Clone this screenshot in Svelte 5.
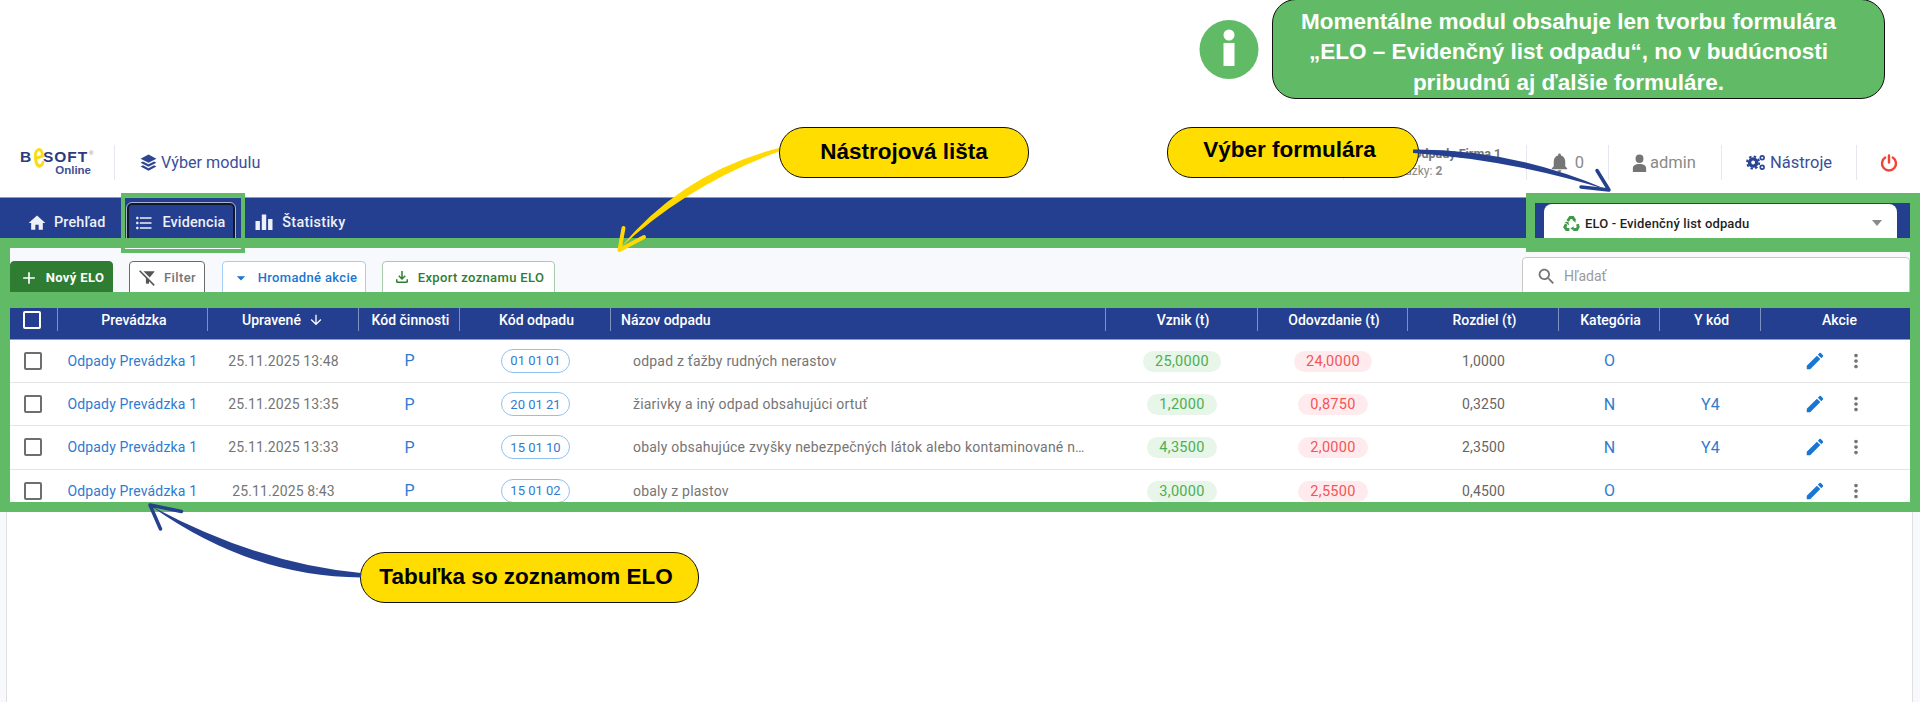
<script>
  // table data
  const columns = [
    { label: 'Prevádzka' },
    { label: 'Upravené', sort: true },
    { label: 'Kód činnosti' },
    { label: 'Kód odpadu' },
    { label: 'Názov odpadu', left: true },
    { label: 'Vznik (t)' },
    { label: 'Odovzdanie (t)' },
    { label: 'Rozdiel (t)' },
    { label: 'Kategória' },
    { label: 'Y kód' },
    { label: 'Akcie', last: true }
  ];

  const rows = [
    { date: '25.11.2025 13:48', code: '01 01 01', name: 'odpad z ťažby rudných nerastov', made: '25,0000', gone: '24,0000', diff: '1,0000', cat: 'O', y: '' },
    { date: '25.11.2025 13:35', code: '20 01 21', name: 'žiarivky a iný odpad obsahujúci ortuť', made: '1,2000', gone: '0,8750', diff: '0,3250', cat: 'N', y: 'Y4' },
    { date: '25.11.2025 13:33', code: '15 01 10', name: 'obaly obsahujúce zvyšky nebezpečných látok alebo kontaminované n…', made: '4,3500', gone: '2,0000', diff: '2,3500', cat: 'N', y: 'Y4' },
    { date: '25.11.2025 8:43', code: '15 01 02', name: 'obaly z plastov', made: '3,0000', gone: '2,5500', diff: '0,4500', cat: 'O', y: '' }
  ];

  const editPath = 'M3 17.25V21h3.75L17.81 9.94l-3.75-3.75L3 17.25zM20.71 7.04c.39-.39.39-1.02 0-1.41l-2.34-2.34c-.39-.39-1.02-.39-1.41 0l-1.83 1.83 3.75 3.75 1.83-1.83z';
  const morePath = 'M12 8c1.1 0 2-.9 2-2s-.9-2-2-2-2 .9-2 2 .9 2 2 2zm0 2c-1.1 0-2 .9-2 2s.9 2 2 2 2-.9 2-2-.9-2-2-2zm0 6c-1.1 0-2 .9-2 2s.9 2 2 2 2-.9 2-2-.9-2-2-2z';
</script>

<div class="page">
  <div class="notes-space"></div>

  <header class="topbar">
    <div class="logo-box">
      <div class="logo">
        <div class="logo-main">B<span class="logo-e">e</span>SOFT<sup>®</sup></div>
        <div class="logo-sub">Online</div>
      </div>
    </div>
    <div class="module">
      <svg width="19" height="19" viewBox="0 0 24 24" fill="#2f4590"><path d="M12 2 2 7.2l10 5.2 10-5.2z" /><path d="M5 10.6 2 12.2l10 5.2 10-5.2-3-1.6-7 3.6z" /><path d="M5 15.6l-3 1.6L12 22.4l10-5.2-3-1.6-7 3.6z" /></svg>
      <span>Výber modulu</span>
    </div>
    <div class="top-right">
      <div class="top-item company">
        <div class="company-name">Firma: Odpady Firma 1</div>
        <div class="company-sub">Prevádzky: <b>2</b></div>
      </div>
      <div class="top-item bell">
        <svg width="23" height="23" viewBox="0 0 24 24" fill="#757575"><path d="M12 22c1.1 0 2-.9 2-2h-4c0 1.1.9 2 2 2zm6-6v-5c0-3.07-1.63-5.64-4.5-6.32V4c0-.83-.67-1.5-1.5-1.5s-1.5.67-1.5 1.5v.68C7.64 5.36 6 7.92 6 11v5l-2 2v1h16v-1l-2-2z" /></svg>
        <span>0</span>
      </div>
      <div class="top-item user">
        <svg width="15" height="18" viewBox="0 0 17 19" preserveAspectRatio="none" fill="#757575"><circle cx="8.5" cy="5" r="4.5" /><path d="M1 19v-4c0-2.6 2.4-4.5 7.5-4.5S16 12.4 16 15v4z" /></svg>
        <span>admin</span>
      </div>
      <div class="top-item tools">
        <svg width="20" height="17" viewBox="0 0 21 17" fill="none" stroke="#2a4494">
          <circle cx="7.5" cy="8.5" r="3.8" stroke-width="3.6" />
          <circle cx="7.5" cy="8.5" r="6.4" stroke-width="2" stroke-dasharray="2.6 2.4" />
          <circle cx="17" cy="3.5" r="2" stroke-width="1.7" />
          <circle cx="17" cy="13.5" r="2" stroke-width="1.7" />
        </svg>
        <span>Nástroje</span>
      </div>
      <div class="top-item power">
        <svg width="18" height="18" viewBox="0 0 18 18" fill="none" stroke="#f44336" stroke-width="2.4" stroke-linecap="round"><path d="M5.2 3.6a7 7 0 1 0 7.6 0" /><path d="M9 1.5v7" /></svg>
      </div>
    </div>
  </header>

  <nav class="nav">
    <div class="tabs">
      <div class="tab">
        <svg width="20" height="20" viewBox="0 0 24 24" fill="#eef0f8"><path d="M10 20v-6h4v6h5v-8h3L12 3 2 12h3v8z" /></svg>
        <span>Prehľad</span>
      </div>
      <div class="tab active">
        <svg width="20" height="20" viewBox="0 0 24 24" fill="#eef0f8"><path d="M4 10.5c-.83 0-1.5.67-1.5 1.5s.67 1.5 1.5 1.5 1.5-.67 1.5-1.5-.67-1.5-1.5-1.5zm0-6c-.83 0-1.5.67-1.5 1.5S3.17 7.5 4 7.5 5.5 6.83 5.5 6 4.83 4.5 4 4.5zm0 12c-.83 0-1.5.68-1.5 1.5s.68 1.5 1.5 1.5 1.5-.68 1.5-1.5-.67-1.5-1.5-1.5zM7 19h14v-2H7v2zm0-6h14v-2H7v2zm0-8v2h14V5H7z" /></svg>
        <span>Evidencia</span>
      </div>
      <div class="tab stats">
        <svg width="18" height="18" viewBox="0 0 18 18" fill="#eef0f8"><rect x="0.5" y="8" width="4.4" height="9" /><rect x="6.8" y="1.5" width="4.4" height="15.5" /><rect x="13.1" y="6" width="4.4" height="11" /></svg>
        <span>Štatistiky</span>
      </div>
    </div>
    <div class="form-select">
      <svg width="17" height="17" viewBox="0 0 24 24" fill="none" stroke="#3f9a45" stroke-width="4">
        <path d="M6.5 8.5 10 3.5h4l2.5 4" />
        <path d="M20.5 13l1 4-2 3.5h-5" />
        <path d="M9 20.5H5l-2.5-3.5 2-4" />
        <path d="M13 6.5l5-.5-.5 5zM15 16l0 6-4.5-3zM2 10l5.5-.5 1 5z" fill="#3f9a45" stroke="none" />
      </svg>
      <span class="form-name">ELO - Evidenčný list odpadu</span>
      <svg class="caret" width="10" height="6" viewBox="0 0 10 6" fill="#8a8a8a"><path d="M0 0h10L5 6z" /></svg>
    </div>
  </nav>

  <div class="shell">
    <main class="panel">
      <div class="toolbar">
        <div class="btn primary">
          <svg width="20" height="20" viewBox="0 0 24 24" fill="#fff"><path d="M19 13h-6v6h-2v-6H5v-2h6V5h2v6h6v2z" /></svg>
          <span>Nový ELO</span>
        </div>
        <div class="btn filter">
          <svg width="19" height="19" viewBox="0 0 24 24" fill="#555"><path d="M14.8 11.97 20.76 4.6c.25-.32.02-.6-.4-.6H6.83l7.97 7.97zM2.81 2.81 1.39 4.22 10 13v6c0 .55.45 1 1 1h2c.55 0 1-.45 1-1v-2.17l5.78 5.78 1.41-1.41L2.81 2.81z" /></svg>
          <span>Filter</span>
        </div>
        <div class="btn bulk">
          <svg width="20" height="20" viewBox="0 0 24 24" fill="#1976d2"><path d="M7 10l5 5 5-5z" /></svg>
          <span>Hromadné akcie</span>
        </div>
        <div class="btn export">
          <svg width="18" height="18" viewBox="0 0 24 24" fill="#2e7d32"><path d="M18 15v3H6v-3H4v3c0 1.1.9 2 2 2h12c1.1 0 2-.9 2-2v-3h-2zm-1-4l-1.41-1.41L13 12.17V4h-2v8.17L8.41 9.59 7 11l5 5 5-5z" /></svg>
          <span>Export zoznamu ELO</span>
        </div>
        <div class="search">
          <svg width="21" height="21" viewBox="0 0 24 24" fill="#757575"><path d="M15.5 14h-.79l-.28-.27C15.41 12.59 16 11.11 16 9.5 16 5.91 13.09 3 9.5 3S3 5.91 3 9.5 5.91 16 9.5 16c1.61 0 3.09-.59 4.23-1.57l.27.28v.79l5 4.99L20.49 19l-4.99-5zm-6 0C7.01 14 5 11.99 5 9.5S7.01 5 9.5 5 14 7.01 14 9.5 11.99 14 9.5 14z" /></svg>
          <span>Hľadať</span>
        </div>
      </div>

      <div class="table">
        <div class="grid head">
          <div class="th check"><span class="box light"></span></div>
          {#each columns as col}
            <div class="th" class:left={col.left} class:last={col.last} class:sorted={col.sort}>
              <span>{col.label}</span>
              {#if col.sort}
                <svg width="16" height="16" viewBox="0 0 24 24" fill="#fff"><path d="M20 12l-1.41-1.41L13 16.17V4h-2v12.17l-5.58-5.59L4 12l8 8 8-8z" /></svg>
              {/if}
            </div>
          {/each}
        </div>

        {#each rows as row}
          <div class="grid row">
            <div class="td"><span class="box"></span></div>
            <div class="td link">Odpady Prevádzka 1</div>
            <div class="td date">{row.date}</div>
            <div class="td big">P</div>
            <div class="td"><span class="code">{row.code}</span></div>
            <div class="td name">{row.name}</div>
            <div class="td"><span class="pill made">{row.made}</span></div>
            <div class="td"><span class="pill gone">{row.gone}</span></div>
            <div class="td diff">{row.diff}</div>
            <div class="td big">{row.cat}</div>
            <div class="td big">{row.y}</div>
            <div class="td actions">
              <svg width="22" height="22" viewBox="0 0 24 24" fill="#1976d2"><path d={editPath} /></svg>
              <svg width="22" height="22" viewBox="0 0 24 24" fill="#757575"><path d={morePath} /></svg>
            </div>
          </div>
        {/each}
      </div>
    </main>
  </div>

  <!-- annotations drawn over the screenshot -->
  <div class="frame frame-tab"></div>
  <div class="frame frame-select"></div>
  <div class="frame frame-toolbar"></div>
  <div class="frame frame-table"></div>

  <div class="callout info">
    Momentálne modul obsahuje len tvorbu formulára<br />
    „ELO – Evidenčný list odpadu“, no v budúcnosti<br />
    pribudnú aj ďalšie formuláre.
  </div>
  <div class="callout tag tag-tool">Nástrojová lišta</div>
  <div class="callout tag tag-form">Výber formulára</div>
  <div class="callout tag tag-table">Tabuľka so zoznamom ELO</div>

  <svg class="marks" width="1920" height="702" viewBox="0 0 1920 702">
    <ellipse cx="1229" cy="49.5" rx="29.5" ry="29.5" fill="#61bb66" />
    <circle cx="1229" cy="35" r="5.5" fill="#fff" />
    <rect x="1223.5" y="43" width="11" height="23" fill="#fff" />

    <path d="M779 148Q683 172 620 248Q689 184 779 151.5z" fill="#ffd900" />
    <path d="M623.5 228L619.5 250L644 237" fill="none" stroke="#ffd900" stroke-width="4" stroke-linecap="round" stroke-linejoin="round" />

    <path d="M1413 149.5Q1513 149 1608 190Q1513 160 1413 153z" fill="#24408f" />
    <path d="M1597 170.5L1609 190L1581 187" fill="none" stroke="#24408f" stroke-width="3.5" stroke-linecap="round" stroke-linejoin="round" />

    <path d="M361 573Q259 564 151 506Q251 577 361 577.5z" fill="#24408f" />
    <path d="M181.5 511.5L150 505L160.5 529" fill="none" stroke="#24408f" stroke-width="3.5" stroke-linecap="round" stroke-linejoin="round" />
  </svg>
</div>

<style>
  :global(body) {
    margin: 0;
    background: #fff;
  }
  .page {
    position: relative;
    width: 1920px;
    height: 702px;
    overflow: hidden;
    background: #fff;
    font-family: Roboto, 'Liberation Sans', sans-serif;
    display: flex;
    flex-direction: column;
  }
  .notes-space {
    height: 120px;
    flex: none;
  }

  /* top bar */
  .topbar {
    height: 77px;
    flex: none;
    box-sizing: border-box;
    padding-top: 25px;
    display: flex;
    align-items: flex-start;
  }
  .logo-box {
    width: 115px;
    height: 35px;
    box-sizing: border-box;
    border-right: 1px solid #e6e8f0;
    padding-left: 20px;
  }
  .logo {
    width: 73px;
    font-family: 'Liberation Sans', sans-serif;
    font-weight: 700;
    color: #2d3a7c;
  }
  .logo-main {
    height: 14px;
    margin-top: 5px;
    font-size: 15.5px;
    line-height: 14px;
    letter-spacing: 0.9px;
    white-space: nowrap;
    display: flex;
  }
  .logo-e {
    display: block;
    width: 11px;
    font-size: 36px;
    line-height: 14px;
    color: #f7dc17;
    transform: scaleX(0.58) rotate(-12deg);
    transform-origin: 3px 7px;
    letter-spacing: 0;
  }
  .logo-main sup {
    font-size: 6px;
    line-height: 6px;
    color: #888;
    font-weight: 400;
    letter-spacing: 0;
    margin-left: 1px;
  }
  .logo-sub {
    font-size: 11.5px;
    line-height: 12px;
    color: #3f5096;
    text-align: right;
    padding-right: 2px;
  }
  .module {
    height: 35px;
    display: flex;
    align-items: center;
    gap: 3px;
    padding-left: 24px;
    font-size: 16.2px;
    color: #3a4e9a;
  }
  .top-right {
    margin-left: auto;
    display: flex;
  }
  .top-item {
    height: 35px;
    box-sizing: border-box;
    border-left: 1px solid #e6e8f0;
    display: flex;
    align-items: center;
    justify-content: center;
    gap: 4px;
    font-size: 16.5px;
    color: #8a8a8a;
  }
  .company {
    width: 183px;
    flex-direction: column;
    align-items: flex-start;
    gap: 0;
    padding-left: 31px;
    font-size: 12px;
    white-space: nowrap;
  }
  .company-name {
    font-weight: 700;
    font-size: 12.5px;
    line-height: 18px;
    margin-left: -1px;
    color: #757575;
  }
  .company-sub {
    font-size: 12px;
    line-height: 17px;
    color: #8a8a8a;
  }
  .bell {
    width: 82px;
    gap: 4px;
    padding-right: 3px;
  }
  .user {
    width: 113px;
    gap: 3px;
    padding-right: 2px;
  }
  .tools {
    width: 135px;
    gap: 4px;
    color: #3a4e9a;
  }
  .power {
    width: 64px;
  }

  /* blue navigation */
  .nav {
    height: 51px;
    flex: none;
    box-sizing: border-box;
    background: #243f8f;
    border-top: 1px solid #8c9bc8;
    padding: 5px 23px 0 18px;
    display: flex;
    justify-content: space-between;
  }
  .tabs {
    display: flex;
    gap: 10px;
  }
  .tab {
    height: 46px;
    box-sizing: border-box;
    padding: 10px 9px 0;
    display: flex;
    align-items: flex-start;
    gap: 7px;
    font-size: 14.4px;
    line-height: 20px;
    font-weight: 500;
    letter-spacing: 0.15px;
    color: #eef0f8;
  }
  .tab.active {
    margin-left: 3px;
    padding: 8px 8px 0 5px;
    gap: 8px;
    border: 2px solid #111827;
    border-radius: 5px;
    outline: 1px solid #a9b1cc;
  }
  .tab.stats {
    margin-left: 1px;
    gap: 9px;
    letter-spacing: 0.3px;
  }
  .form-select {
    width: 353px;
    height: 44px;
    box-sizing: border-box;
    margin-top: 1px;
    background: #fff;
    border-radius: 8px;
    padding: 0 15px 6px 19px;
    display: flex;
    align-items: center;
    gap: 5px;
  }
  .form-name {
    font-size: 13px;
    font-weight: 500;
    color: #1f1f1f;
    letter-spacing: 0.15px;
  }
  .caret {
    margin-left: auto;
  }

  /* content */
  .shell {
    flex: 1;
    min-height: 0;
    background: #f8f9fc;
    padding: 0 7px 0 6px;
    display: flex;
  }
  .panel {
    flex: 1;
    min-width: 0;
    box-sizing: border-box;
    background: #fff;
    border-left: 1px solid #e0e0e0;
    border-right: 1px solid #e0e0e0;
    padding: 0 2px 0 3px;
  }
  .toolbar {
    height: 60px;
    box-sizing: border-box;
    background: #f8f9fc;
    padding-top: 13px;
    display: flex;
    align-items: flex-start;
    gap: 17px;
  }
  .btn {
    height: 36px;
    box-sizing: border-box;
    border: 1px solid;
    border-radius: 4px;
    background: #fff;
    padding-top: 6px;
    display: flex;
    align-items: flex-start;
    justify-content: center;
    gap: 7px;
    font-size: 13px;
    line-height: 20px;
    font-weight: 500;
    letter-spacing: 0.35px;
    white-space: nowrap;
  }
  .primary {
    width: 103px;
    background: #2e7d32;
    border-color: #2e7d32;
    color: #fff;
    font-weight: 700;
  }
  .filter {
    width: 76px;
    margin-left: -1px;
    border-color: #6b6b6b;
    color: #757575;
  }
  .bulk {
    width: 144px;
    border-color: #a3cdf3;
    color: #1976d2;
  }
  .export {
    width: 173px;
    margin-left: -1px;
    border-color: #a9cbab;
    color: #2e7d32;
  }
  .search {
    width: 388px;
    height: 44px;
    box-sizing: border-box;
    margin: -4px 0 0 auto;
    background: #fff;
    border: 1px solid #c8c8c8;
    border-radius: 4px;
    padding: 8px 0 0 13px;
    display: flex;
    align-items: flex-start;
    gap: 7px;
    font-size: 14px;
    line-height: 21px;
    color: #9a9a9a;
  }

  /* table */
  .table {
    height: 204px;
    overflow: hidden;
  }
  .grid {
    display: grid;
    grid-template-columns: 48px 150px 151px 101px 151px 495px 152px 150px 151px 101px 101px 149px;
  }
  .head {
    height: 31.5px;
    box-sizing: border-box;
    background: #243f8f;
    border-bottom: 1px solid #8c9bc8;
    align-items: start;
  }
  .th {
    height: 23px;
    box-sizing: border-box;
    border-right: 1px solid rgba(255, 255, 255, 0.42);
    padding-left: 3px;
    display: flex;
    align-items: center;
    justify-content: center;
    gap: 7px;
    color: #fff;
    font-size: 14px;
    font-weight: 500;
    white-space: nowrap;
  }
  .th.check {
    padding: 0 3px 0 0;
  }
  .th.sorted {
    padding-left: 0;
  }
  .th.left {
    justify-content: flex-start;
    padding-left: 10px;
  }
  .th.last {
    border-right: 0;
    padding-left: 8px;
  }
  .row {
    height: 43.4px;
    box-sizing: border-box;
    border-bottom: 1px solid #e4e4e4;
    background: #fff;
    align-items: center;
  }
  .td {
    display: flex;
    align-items: center;
    justify-content: center;
    font-size: 14px;
    letter-spacing: 0.12px;
    color: #757575;
    white-space: nowrap;
    min-width: 0;
  }
  .box {
    display: block;
    width: 18px;
    height: 18px;
    box-sizing: border-box;
    border: 2px solid #6e6e6e;
    border-radius: 2px;
  }
  .td .box {
    margin-right: 3px;
  }
  .box.light {
    border-color: #fff;
  }
  .link {
    justify-content: flex-start;
    padding-left: 9.5px;
    letter-spacing: 0.15px;
    color: #2f7bd0;
  }
  .big {
    font-size: 16px;
    color: #2f7bd0;
  }
  .code {
    width: 69px;
    height: 24px;
    box-sizing: border-box;
    border: 1px solid #90c2f0;
    border-radius: 12px;
    display: flex;
    align-items: center;
    justify-content: center;
    font-size: 13px;
    letter-spacing: 0;
    color: #2f7bd0;
  }
  .name {
    justify-content: flex-start;
    padding-left: 22px;
    letter-spacing: 0.21px;
  }
  .pill {
    box-sizing: border-box;
    height: 21px;
    line-height: 21px;
    margin-top: 1px;
    padding: 0 12.5px;
    border-radius: 11px;
    font-size: 14.5px;
    letter-spacing: 0.3px;
  }
  .made {
    background: #e8f5e9;
    color: #4caf50;
  }
  .gone {
    background: #ffebee;
    color: #f25555;
  }
  .diff {
    color: #666;
  }
  .actions {
    justify-content: flex-start;
    padding-left: 43px;
    gap: 19px;
  }

  /* green highlight frames */
  .frame {
    position: absolute;
    box-sizing: border-box;
    border: 10px solid #61bb66;
  }
  .frame-tab {
    left: 121px;
    top: 193px;
    width: 124px;
    height: 60px;
    border-width: 4px;
  }
  .frame-select {
    left: 1526px;
    top: 193px;
    width: 394px;
    height: 59px;
    border-width: 10px 10px 14px 9px;
  }
  .frame-toolbar {
    left: 0;
    top: 238px;
    width: 1920px;
    height: 70px;
    border-width: 10px 10px 16px 10px;
  }
  .frame-table {
    left: 0;
    top: 300px;
    width: 1920px;
    height: 212px;
    border-width: 8px 10px 10px 10px;
  }

  /* callouts */
  .callout {
    position: absolute;
    box-sizing: border-box;
    border: 1px solid #111;
    display: flex;
    align-items: center;
    justify-content: center;
    font-family: 'Liberation Sans', Arial, sans-serif;
    font-weight: 700;
    text-align: center;
    white-space: nowrap;
  }
  .info {
    left: 1272px;
    top: -1px;
    width: 613px;
    height: 100px;
    padding: 7px 20px 0 0;
    background: #61bb66;
    border-radius: 24px;
    color: #fff;
    font-size: 22.5px;
    line-height: 30.5px;
  }
  .tag {
    height: 51px;
    background: #ffdd00;
    border-radius: 25px;
    color: #000;
    font-size: 22.5px;
  }
  .tag-tool {
    left: 779px;
    top: 127px;
    width: 250px;
    padding-bottom: 2px;
  }
  .tag-form {
    left: 1167px;
    top: 127px;
    width: 252px;
    padding: 0 7px 6px 0;
  }
  .tag-table {
    left: 360px;
    top: 552px;
    width: 339px;
    padding: 0 7px 2px 0;
  }
  .marks {
    position: absolute;
    left: 0;
    top: 0;
    pointer-events: none;
  }
</style>
